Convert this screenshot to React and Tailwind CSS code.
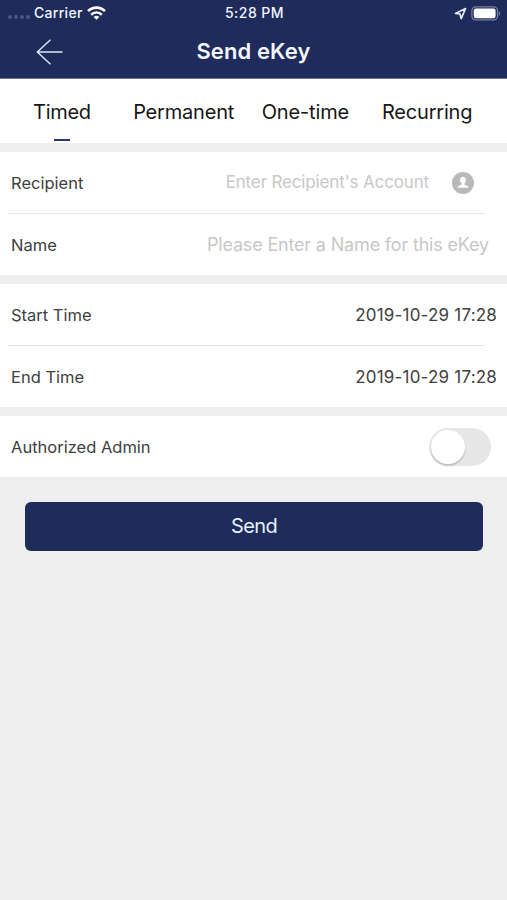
const TABS = [
  { label: 'Timed', spacing: 'tracking-[-0.3px]' },
  { label: 'Permanent', spacing: 'tracking-[-0.2px]' },
  { label: 'One-time', spacing: 'tracking-[-0.15px]' },
  { label: 'Recurring', spacing: 'tracking-[-0.2px]' },
];

function StatusBar() {
  return (
    <div className="flex h-[26px] items-center pr-[6px] pl-[8px] text-[14px] font-medium">
      <div className="flex flex-1 items-center">
        <div className="mt-[8px] flex gap-[2px]">
          {[0, 1, 2, 3].map((dot) => (
            <span key={dot} className="size-[4px] rounded-full bg-[#4d5884]" />
          ))}
        </div>
        <span className="mb-[2px] ml-[4px] tracking-[0.3px]">Carrier</span>
        <svg className="ml-[4px] h-[14px] w-[19px]" viewBox="0 0 19 14" fill="none" stroke="white" strokeWidth="2.6">
          <path d="M1 5.2C5.8 0.4 13.2 0.4 18 5.2" />
          <path d="M4.2 8.7C7.3 5.8 11.7 5.8 14.8 8.7" />
          <path d="M9.5 13.8L6.6 10.9C8.3 9.4 10.7 9.4 12.4 10.9Z" fill="white" stroke="none" />
        </svg>
      </div>
      <span className="mb-[2px] tracking-[0.45px] whitespace-nowrap">5:28 PM</span>
      <div className="flex flex-1 items-center justify-end">
        <svg className="h-[13px] w-[13px]" viewBox="0 0 13 13" fill="none" stroke="#e4edf5" strokeWidth="1.7" strokeLinejoin="round">
          <path d="M11.5 1.5L1.5 6.4L6 7L7.2 11.6Z" />
        </svg>
        <svg className="ml-[4px] h-[15px] w-[30px]" viewBox="0 0 30 15" fill="none">
          <rect x="0.9" y="0.9" width="25.6" height="13" rx="3.8" stroke="#7780a2" strokeWidth="1.2" />
          <rect x="2.8" y="2.6" width="21.8" height="9.6" rx="2.2" fill="white" />
          <path d="M27.8 5.2C29.7 6 29.7 9 27.8 9.8Z" fill="#7780a2" />
        </svg>
      </div>
    </div>
  );
}

function Header() {
  return (
    <header className="h-[79px] border-b border-[#657497] bg-[#1e2b5b] text-[#f2f6ff]">
      <StatusBar />
      <div className="grid h-[52px] grid-cols-[1fr_auto_1fr] items-center">
        <svg className="ml-[36px] h-[26px] w-[27px]" viewBox="0 0 27 26" fill="none" stroke="#dceaf8" strokeWidth="1.4">
          <path d="M14.5 0.8L1.3 13L14.5 25.2M1.3 13H26.5" />
        </svg>
        <h1 className="mb-[2px] text-[22px] leading-[30px] font-semibold tracking-[0.1px]">Send eKey</h1>
      </div>
    </header>
  );
}

function Tabs() {
  return (
    <nav className="grid h-[64px] grid-cols-4 bg-white pr-[19px] pl-[1px] text-[20px] text-[#161616]">
      {TABS.map((tab, index) => (
        <div key={tab.label} className="flex flex-col items-center justify-between pt-[17px] pb-[2px]">
          <span className={`leading-[32px] whitespace-nowrap ${tab.spacing}`}>{tab.label}</span>
          {index === 0 && <span className="h-[2px] w-[16px] bg-[#263575]" />}
        </div>
      ))}
    </nav>
  );
}

function Divider() {
  return <div className="mr-[22px] ml-[8px] h-px bg-[#e6e6e6]" />;
}

function Row({ label, children }) {
  return (
    <div className="flex h-[61px] items-center justify-between pl-[11px]">
      <span className="pt-[2px] text-[16.5px] text-[#404040]">{label}</span>
      {children}
    </div>
  );
}

function ContactIcon() {
  return (
    <svg className="mr-[33px] ml-[23px] size-[22px]" viewBox="0 0 22 22">
      <circle cx="11" cy="11" r="11" fill="#b9b9b9" />
      <path
        d="M11 4.8C9 4.8 8 6.2 8.1 8.2C8.2 9.6 8.8 10.6 9.5 11.3V12.7L6.4 14.1C5.9 14.4 5.7 15 5.7 15.8H16.3C16.3 15 16.1 14.4 15.6 14.1L12.5 12.7V11.3C13.2 10.6 13.8 9.6 13.9 8.2C14 6.2 13 4.8 11 4.8Z"
        fill="white"
      />
    </svg>
  );
}

export default function App() {
  return (
    <main className="h-[900px] w-[507px] overflow-hidden bg-[#eeeeee] font-['Inter','Liberation_Sans',sans-serif]">
      <Header />
      <Tabs />
      <section className="mt-[9px] bg-white">
        <Row label="Recipient">
          <div className="flex items-center">
            <span className="pt-[1px] text-[17px] tracking-[-0.15px] text-[#c8c8c8]">Enter Recipient's Account</span>
            <ContactIcon />
          </div>
        </Row>
        <Divider />
        <Row label="Name">
          <span className="mr-[18px] text-[18px] tracking-[-0.17px] text-[#c8c8c8]">Please Enter a Name for this eKey</span>
        </Row>
      </section>
      <section className="mt-[9px] bg-white">
        <Row label="Start Time">
          <span className="mr-[10px] pt-[2px] text-[17px] tracking-[0.19px] text-[#404040]">2019-10-29 17:28</span>
        </Row>
        <Divider />
        <Row label="End Time">
          <span className="mr-[10px] pt-[2px] text-[17px] tracking-[0.19px] text-[#404040]">2019-10-29 17:28</span>
        </Row>
      </section>
      <section className="mt-[9px] bg-white">
        <Row label="Authorized Admin">
          <div className="mr-[16px] flex h-[38px] w-[62px] items-center rounded-full bg-[#e7e7e7] pl-[2px]">
            <span className="size-[34px] rounded-full bg-white shadow-[0_2px_2px_rgba(0,0,0,0.18)]" />
          </div>
        </Row>
      </section>
      <button className="mt-[25px] ml-[25px] block h-[49px] w-[458px] rounded-[6px] bg-[#1e2b5b] pb-[1px] text-[20px] tracking-[-0.6px] text-[#e9f0fb]">
        Send
      </button>
    </main>
  );
}
